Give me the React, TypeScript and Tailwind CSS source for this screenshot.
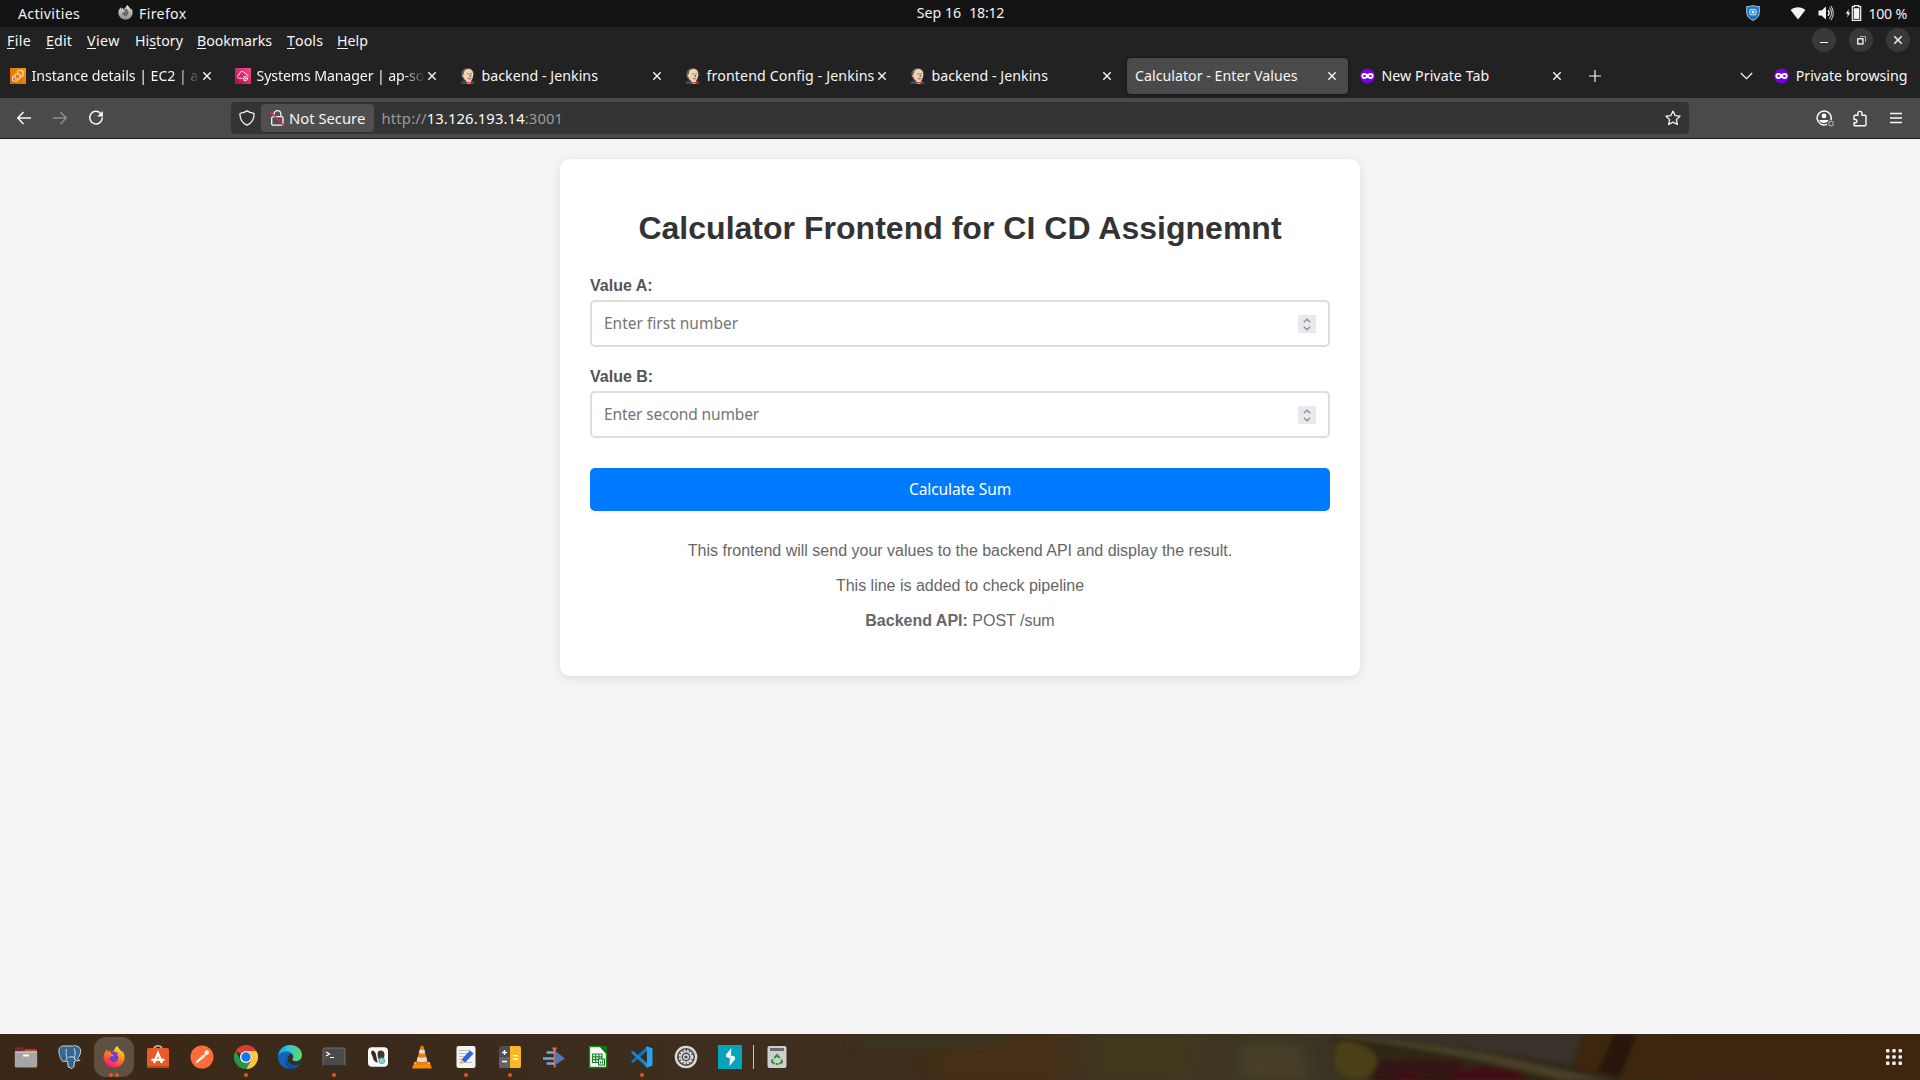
import React from "react";
import { FaEdge, FaFirefoxBrowser } from "react-icons/fa";
import { SiPostgresql } from "react-icons/si";

const CloseX = ({ className = "" }: { className?: string }) => (
  <svg width="10" height="10" viewBox="0 0 10 10" className={className}>
    <path d="M1.3 1.3 8.7 8.7M8.7 1.3 1.3 8.7" stroke="#f4f4f4" strokeWidth="1.4" fill="none" />
  </svg>
);

const PrivateMask = () => (
  <svg width="16" height="16" viewBox="0 0 16 16" className="shrink-0">
    <circle cx="7.5" cy="8" r="7.4" fill="#7b00d8" />
    <path
      fillRule="evenodd"
      fill="#fff"
      d="M4.4 5.1C5.8 5.1 6.6 6 7.5 6s1.7-.9 3.1-.9c2 0 3 .9 3 2.6 0 2-1.3 3.3-3 3.3-1.6 0-2.2-1.3-3.1-1.3S6 11 4.4 11c-1.7 0-3-1.3-3-3.3 0-1.7 1-2.6 3-2.6ZM4.6 7C3.7 7 3.2 7.6 2.9 8c.4.6.9 1 1.7 1s1.3-.5 1.6-1c-.4-.6-.8-1-1.6-1Zm5.8 0c-.8 0-1.3.4-1.6 1 .3.6.8 1 1.6 1s1.3-.4 1.7-1c-.4-.6-.9-1-1.7-1Z"
    />
  </svg>
);

const Jenkins = () => (
  <svg width="16" height="16" viewBox="0 0 16 16" className="shrink-0">
    <path d="M.5 16c0-2 1.3-3.300 3.800-3.500l8 .2c1.600.300 2.200 1.600 2.200 3.300Z" fill="#2f4f63" />
    <path d="M6 12.500 7 16h3.500l1-3.500Z" fill="#f4efe6" />
    <path d="M1.500 7C1 3 3.800.2 7.800.2s6.200 2.600 5.900 6.300l-1.500 5-8.200.5C2.500 10.500 1.700 9 1.500 7Z" fill="#6a6058" />
    <path d="M4 4.500C4.700 2 6.200 1.100 8.300 1.100c2.900 0 4.900 2.200 4.900 5.200 0 4-1.900 7.300-4.500 7.300-2.700 0-4.600-2.100-5-4.600-1.300-.1-1.600-1.800-.6-2.300.8-.2.800-1.400.9-2.200Z" fill="#efd3b4" />
    <path d="M7.500 5.800h1.300M10.600 5.800h1.300M9.900 6.500l.7 1.900-1.100.1M7.700 10.300c1.200.7 2.400.7 3.600-.2" stroke="#5a463c" strokeWidth=".9" fill="none" />
    <path d="m6.400 13.600 2.500.7 2.900-.9.400 2.600-3.100-.7L6.600 16Z" fill="#e0241d" />
  </svg>
);

const Ec2 = () => (
  <svg width="16" height="16" viewBox="0 0 16 16" className="shrink-0">
    <defs>
      <linearGradient id="ec2" x1="0" y1="1" x2="1" y2="0">
        <stop offset="0" stopColor="#d0620f" />
        <stop offset="1" stopColor="#ff9900" />
      </linearGradient>
    </defs>
    <rect width="16" height="16" fill="url(#ec2)" />
    <g fill="none" stroke="#fff" strokeWidth=".9" opacity=".95">
      <rect x="5" y="6" width="5" height="5" rx=".8" />
      <path d="M7.500 5.500V3.300c0-.4.200-.6.600-.6h4.400c.4 0 .6.200.6.600v4.400c0 .4-.2.600-.6.600h-2" />
      <path d="M4.500 8H3.200c-.4 0-.6.200-.6.600v4c0 .4.200.6.600.6h4c.4 0 .6-.2.600-.6v-1.200" />
    </g>
  </svg>
);

const Ssm = () => (
  <svg width="16" height="16" viewBox="0 0 16 16" className="shrink-0">
    <defs>
      <linearGradient id="ssm" x1="0" y1="1" x2="1" y2="0">
        <stop offset="0" stopColor="#b0084d" />
        <stop offset="1" stopColor="#ff4f8b" />
      </linearGradient>
    </defs>
    <rect width="16" height="16" fill="url(#ssm)" />
    <path d="M7 10.300H4.600C3.200 10.200 2.500 9.400 2.600 8.300c0-1 .8-1.700 1.800-1.800C4.400 4.500 5.700 3.500 7.200 3.500c1.300 0 2.200.7 2.600 1.900 1.200-.2 1.900.5 2 1.500.9.200 1.400.7 1.500 1.400" fill="none" stroke="#fff" strokeWidth=".9" />
    <circle cx="10.300" cy="10.600" r="2" fill="none" stroke="#fff" strokeWidth="1.200" strokeDasharray="1.200 .5" />
    <circle cx="10.300" cy="10.600" r=".8" fill="#fff" />
  </svg>
);

interface Tab {
  title: string;
  icon: React.ReactNode;
  active?: boolean;
  fade?: boolean;
  spacing: string;
}

const tabs: Tab[] = [
  { title: "Instance details | EC2 | ap", icon: <Ec2 />, fade: true, spacing: "tracking-[-0.04px]" },
  { title: "Systems Manager | ap-sou", icon: <Ssm />, fade: true, spacing: "tracking-[-0.13px]" },
  { title: "backend - Jenkins", icon: <Jenkins />, spacing: "tracking-[0.03px]" },
  { title: "frontend Config - Jenkins", icon: <Jenkins />, spacing: "tracking-[0.117px]" },
  { title: "backend - Jenkins", icon: <Jenkins />, spacing: "tracking-[0.03px]" },
  { title: "Calculator - Enter Values", icon: null, active: true, spacing: "tracking-[0.02px]" },
  { title: "New Private Tab", icon: <PrivateMask />, spacing: "tracking-[0.06px]" },
];

const menus = [
  { pre: "", key: "F", post: "ile", width: "w-[39px]", spacing: "tracking-[0.33px]" },
  { pre: "", key: "E", post: "dit", width: "w-[41px]", spacing: "tracking-[0.15px]" },
  { pre: "", key: "V", post: "iew", width: "w-[48px]", spacing: "tracking-[0.45px]" },
  { pre: "Hi", key: "s", post: "tory", width: "w-[62px]", spacing: "tracking-[0.03px]" },
  { pre: "", key: "B", post: "ookmarks", width: "w-[90px]", spacing: "tracking-[-0.05px]" },
  { pre: "", key: "T", post: "ools", width: "w-[50px]", spacing: "tracking-[0.1px]" },
  { pre: "", key: "H", post: "elp", width: "w-[40px]", spacing: "tracking-[0.03px]" },
];

function SystemBar() {
  return (
    <div className="grid h-[27px] grid-cols-3 items-center bg-[#131313] text-[#f2f2f2]">
      <div className="flex items-center pl-[18px]">
        <span className="w-[100px] tracking-[0.29px]">Activities</span>
        <svg width="15" height="15" viewBox="0 0 16 16" className="-mt-[2px]">
          <defs>
            <linearGradient id="grey" x1="0" y1="0" x2="0" y2="1">
              <stop offset="0" stopColor="#e4e4e4" />
              <stop offset="1" stopColor="#8c8c8c" />
            </linearGradient>
          </defs>
          <circle cx="8.500" cy="8" r="5" fill="#6a6a6a" />
          <FaFirefoxBrowser size={16} fill="url(#grey)" />
        </svg>
        <span className="ml-1.5 tracking-[0.32px]">Firefox</span>
      </div>
      <div className="-mt-px flex justify-center gap-2 pl-px">
        <span>Sep 16</span>
        <span className="tracking-[-0.25px]">18:12</span>
      </div>
      <div className="flex items-center justify-end pr-[13px]">
        <svg width="16" height="16" viewBox="0 0 16 16" className="-mt-[2px] mr-[29px]">
          <path d="M8 .7c2 .7 4.400.8 6.300.8v5.800c0 4-2.600 6.500-6.300 8-3.700-1.500-6.300-4-6.300-8V1.500c1.900 0 4.300-.1 6.300-.8Z" fill="#1b74c4" stroke="#a9cbe6" strokeWidth="1" />
          <rect x="4.800" y="4.300" width="6.400" height="5.600" rx="1" fill="#4c9fe2" stroke="#cfe6f8" strokeWidth=".9" />
          <rect x="7" y="6.100" width="2" height="2" fill="#fff" />
        </svg>
        <svg width="16" height="14" viewBox="0 0 16 14" className="-mt-px mr-[12px]">
          <path d="M8 13.500.6 4C4.800.3 11.200.3 15.400 4Z" fill="#f2f2f2" />
        </svg>
        <svg width="16" height="16" viewBox="0 0 16 16" className="-mt-[2px] mr-[11px]">
          <path d="M.5 5.500h3L8 1.500v13L3.500 10.500h-3Z" fill="#f2f2f2" />
          <path d="M10 5.200c1.300 1.600 1.300 4 0 5.600" stroke="#f2f2f2" strokeWidth="1.400" fill="none" />
          <path d="M11.300 2.500c3 3 3 8 0 11M12.800.8c3.300 4 3.300 10.400 0 14.400" stroke="#bdbdbd" strokeWidth="1.100" fill="none" />
        </svg>
        <svg width="17" height="16" viewBox="0 0 17 16" className="-mt-[2px] mr-[6px]">
          <path d="M3.800 4 .8 8.800h2L2.200 12.500 5.300 7.500h-2Z" fill="#f2f2f2" />
          <path d="M9.300 1.700V.6h4.400v1.100h2v13.600H7.300V1.700Z" fill="none" stroke="#f2f2f2" strokeWidth="1.200" />
          <rect x="8.700" y="3.200" width="5.600" height="10.700" fill="#f2f2f2" />
        </svg>
        <span className="tracking-[-0.36px] [word-spacing:0.500px]">100 %</span>
      </div>
    </div>
  );
}

function MenuBar() {
  return (
    <div className="flex h-[27px] items-start justify-between">
      <div className="flex pl-[7px] pt-[4px] leading-[20px] text-[#f6f6f6]">
        {menus.map((m) => (
          <span key={m.key + m.post} className={`${m.width} ${m.spacing}`}>
            {m.pre}
            <span className="inline-block h-[18px] border-b border-[#f6f6f6] align-top">{m.key}</span>
            {m.post}
          </span>
        ))}
      </div>
      <div className="flex gap-[13px] pr-[10px] pt-px">
        <span className="flex size-6 items-center justify-center rounded-full bg-[#383838]">
          <span className="mt-[5px] h-px w-2 bg-white" />
        </span>
        <span className="flex size-6 items-center justify-center rounded-full bg-[#383838]">
          <svg width="9" height="9" viewBox="0 0 9 9">
            <rect x=".75" y="2.750" width="5.200" height="5.200" fill="none" stroke="#fff" strokeWidth="1.300" />
            <path d="M3 .5h5.500V6" fill="none" stroke="#a8a8a8" />
          </svg>
        </span>
        <span className="flex size-6 items-center justify-center rounded-full bg-[#383838]">
          <CloseX />
        </span>
      </div>
    </div>
  );
}

function TabStrip() {
  return (
    <div className="flex h-11 items-center pl-[2px] text-[#f6f6f6]">
      {tabs.map((t, i) => (
        <div
          key={i}
          className={`mr-1 flex h-9 w-[221px] shrink-0 items-center rounded-[4px] pl-2 pr-[11px] ${t.active ? "bg-[#4a4a4a] shadow-[0_0_3px_rgba(0,0,0,0.6)]" : ""}`}
        >
          {t.icon}
          <span
            className={`min-w-0 flex-1 whitespace-nowrap ${t.icon ? "ml-[5.500px]" : "ml-0"} ${t.spacing} ${
              t.fade ? "mr-[2px] [mask-image:linear-gradient(to_left,transparent,black_22px)]" : ""
            }`}
          >
            {t.title}
          </span>
          <CloseX className="shrink-0" />
        </div>
      ))}
      <svg width="12" height="12" viewBox="0 0 12 12" className="ml-[12px]">
        <path d="M6 0v12M0 6h12" stroke="#f4f4f4" strokeWidth="1.200" />
      </svg>
      <svg width="13" height="8" viewBox="0 0 13 8" className="ml-auto mr-[21px] shrink-0">
        <path d="M.8 1 6.500 6.700 12.200 1" stroke="#f4f4f4" strokeWidth="1.300" fill="none" />
      </svg>
      <PrivateMask />
      <span className="ml-[5.500px] mr-[12.500px] whitespace-nowrap">Private browsing</span>
    </div>
  );
}

function NavBar() {
  return (
    <div className="flex h-[40px] items-center bg-[#4a4a4a]">
      <svg width="14" height="14" viewBox="0 0 14 14" className="ml-[17px]">
        <path d="M14 7H1M6.500 1 .8 7l5.700 6" stroke="#fbfbfb" strokeWidth="1.500" fill="none" />
      </svg>
      <svg width="14" height="14" viewBox="0 0 14 14" className="ml-[22px]">
        <path d="M0 7h13M7.500 1l5.700 6-5.700 6" stroke="#8e8e8e" strokeWidth="1.500" fill="none" />
      </svg>
      <svg width="16" height="16" viewBox="0 0 16 16" className="ml-[21px]">
        <path d="M12.500 3.200A6.300 6.300 0 1 0 14.300 8" stroke="#fbfbfb" strokeWidth="1.500" fill="none" strokeLinecap="round" />
        <path d="M14.900.9v5.700H9.200Z" fill="#fbfbfb" />
      </svg>
      <div className="ml-[127px] flex h-8 w-[1458px] items-center rounded-[4px] bg-[#343434] pl-[8px] text-[15px]">
        <svg width="16" height="16" viewBox="0 0 16 16">
          <path d="M8 .9c1.800 1.200 4 2 6.300 2.200.6 0 .8.400.8.900C15 9.200 12.400 13.300 8 15.200 3.600 13.300 1 9.200.9 4c0-.5.200-.9.800-.9C4 2.900 6.200 2.100 8 .9Z" stroke="#f4f4f4" strokeWidth="1.300" fill="none" />
        </svg>
        <span className="ml-[6px] flex h-7 w-[113px] items-center rounded-[4px] bg-[#4f4f4f] pl-[9px] text-[#f6f6f6]">
          <svg width="15" height="16" viewBox="0 0 15 16" className="shrink-0">
            <path d="M4 6.500V4a3.400 3.400 0 0 1 6.800 0v2.500" stroke="#f4f4f4" strokeWidth="1.300" fill="none" />
            <rect x="1.700" y="6.700" width="11.300" height="8.500" rx="1.500" stroke="#f4f4f4" strokeWidth="1.300" fill="none" />
            <path d="M0 1.500 13.800 15.500" stroke="#e22850" strokeWidth="1.500" />
          </svg>
          <span className="ml-[4px] whitespace-nowrap text-[14.800px]">Not Secure</span>
        </span>
        <span className="ml-[7.500px] whitespace-nowrap text-[14.800px] text-[#9a9a9a]">
          <span className="tracking-[0.18px]">http://</span>
          <span className="tracking-[0.12px] text-[#fbfbfb]">13.126.193.14</span>
          <span className="tracking-[0.1px]">:3001</span>
        </span>
        <svg width="16" height="16" viewBox="0 0 16 16" className="ml-auto mr-[8px]">
          <path d="m8 1.100 2.100 4.500 4.900.6-3.600 3.400.9 4.900L8 12.100l-4.300 2.400.9-4.900L1 6.200l4.900-.6Z" stroke="#f4f4f4" strokeWidth="1.300" strokeLinejoin="round" fill="none" />
        </svg>
      </div>
      <svg width="19" height="17" viewBox="0 0 19 17" className="ml-[127px]">
        <path d="M14.800 10.200A7 7 0 1 0 11 14.400" stroke="#fbfbfb" strokeWidth="1.500" fill="none" />
        <circle cx="8" cy="5.900" r="2.400" fill="#fbfbfb" />
        <path d="M3.600 10h8.200c.6 0 .8.500.4 1-1.900 2.600-6.500 2.700-8.700 0-.4-.5-.4-1 .1-1Z" fill="#fbfbfb" />
        <circle cx="15" cy="13.600" r="2.300" stroke="#a5a5a5" strokeWidth="1.200" fill="none" />
      </svg>
      <svg width="16" height="17" viewBox="0 0 16 17" className="ml-[17px]">
        <path d="M2 9.500V6.200c0-.6.300-.9.900-.9h3V3.400a2 2 0 0 1 4 0v1.900h3.200c.6 0 .9.300.9.900v8.600c0 .6-.3.900-.9.900H2.900c-.6 0-.9-.3-.9-.9v-2h1.600a1.700 1.700 0 0 0 0-3.300H2Z" stroke="#fbfbfb" strokeWidth="1.400" fill="none" strokeLinejoin="round" />
      </svg>
      <svg width="12" height="12" viewBox="0 0 12 12" className="ml-[22px]">
        <path d="M0 1.500h12M0 6h12M0 10.500h12" stroke="#fbfbfb" strokeWidth="1.300" />
      </svg>
    </div>
  );
}

function NumberField({ label, hint, spacing }: { label: string; hint: string; spacing: string }) {
  return (
    <div className="mb-5 h-[71px]">
      <label className="block h-6 pt-px font-bold leading-[18px] text-[#555]">{label}</label>
      <div className="flex h-[47px] items-center justify-between rounded-[5px] border-2 border-[#ddd] bg-white pl-3 pr-3">
        <span className={`-mt-px font-['Noto_Sans',sans-serif] text-[15.500px] text-[#757575] ${spacing}`}>{hint}</span>
        <span className="mt-px flex size-[18px] items-center justify-center bg-[#e9e9ed]">
          <svg width="8" height="13" viewBox="0 0 8 13">
            <path d="M.8 4.300 4 1.200l3.200 3.100M.8 8.700 4 11.800l3.200-3.100" stroke="#8f8f9d" strokeWidth="1.500" fill="none" />
          </svg>
        </span>
      </div>
    </div>
  );
}

function Page() {
  return (
    <div className="h-[895px] bg-[#f4f4f4] pt-5 font-['Liberation_Sans',Arial,sans-serif] text-base leading-[18px]">
      <div className="mx-auto h-[517px] w-[800px] rounded-[10px] bg-white px-[30px] pt-[51px] shadow-[0_2px_10px_rgba(0,0,0,0.1)]">
        <h1 className="mb-[29px] text-center text-[32px] font-bold leading-[37px] tracking-[0.02px] text-[#333]">
          Calculator Frontend for CI CD Assignemnt
        </h1>
        <NumberField label="Value A:" hint="Enter first number" spacing="tracking-normal" />
        <NumberField label="Value B:" hint="Enter second number" spacing="tracking-[-0.12px]" />
        <button className="mt-[30px] block h-[43px] w-full rounded-[5px] bg-[#007bff] pb-px font-['Noto_Sans',sans-serif] text-[15.500px] tracking-[-0.08px] text-white">
          Calculate Sum
        </button>
        <div className="mt-[31px] flex flex-col gap-[17px] text-center text-[#666]">
          <p>This frontend will send your values to the backend API and display the result.</p>
          <p>This line is added to check pipeline</p>
          <p>
            <strong>Backend API:</strong> POST /sum
          </p>
        </div>
      </div>
    </div>
  );
}

const Art = ({ children }: { children: React.ReactNode }) => (
  <svg width="24" height="24" viewBox="0 0 24 24">
    {children}
  </svg>
);

const dock: { name: string; dots: number; active?: boolean; art: React.ReactNode }[] = [
  {
    name: "Files",
    dots: 0,
    art: (
      <Art>
        <path d="M1 4.500C1 3 1.500 2.300 3 2.300h6l2.500 2H21c1.300 0 2 .7 2 2V12H1Z" fill="#7c2440" />
        <path d="M11 4.300h10c1.300 0 2 .7 2 2V9h-13Z" fill="#c8472f" />
        <rect x=".8" y="6.500" width="22.400" height="16" rx="1.500" fill="#a6a6a6" />
        <rect x=".8" y="6.500" width="22.400" height="1" fill="#d6d6d6" />
        <rect x="9" y="9.500" width="6" height="2" rx=".6" fill="#fafafa" />
      </Art>
    ),
  },
  {
    name: "pgAdmin",
    dots: 0,
    art: (
      <svg width="26" height="26" viewBox="-1 -1 26 26">
        <path d="M5 1C1 1.500.3 5 1.300 9c.8 3.500 2 7 4.200 7.500L9.500 16l.8 6 3.500 1.500 2-2 .7-5.500 5-.5-1.700-2c2-2.500 3.500-6.500 2.700-9C21 .8 17 .2 14.500 1Z" fill="#336791" stroke="#dfe8f0" strokeWidth="1" />
        <path d="M8.500 4C7.500 7 8 10 9 12.500L8 15.500M16 3.500c1.500 3 1.500 6 .3 9l1 2.500M10.500 12.500c1.500-1 4-1 5.500 0" fill="none" stroke="#dfe8f0" strokeWidth="1" />
        <SiPostgresql size={24} color="#336791" opacity=".35" />
      </svg>
    ),
  },
  {
    name: "Firefox",
    dots: 2,
    active: true,
    art: (
      <Art>
        <defs>
          <linearGradient id="fox" x1=".8" y1="0" x2=".3" y2="1">
            <stop offset="0" stopColor="#fff14a" />
            <stop offset=".4" stopColor="#ff980e" />
            <stop offset=".8" stopColor="#ff3750" />
            <stop offset="1" stopColor="#e31587" />
          </linearGradient>
        </defs>
        <g transform="translate(1 1) scale(.92)">
          <circle cx="12.500" cy="11.800" r="7" fill="#6b3be0" />
          <FaFirefoxBrowser size={24} fill="url(#fox)" />
        </g>
      </Art>
    ),
  },
  {
    name: "Ubuntu Software",
    dots: 0,
    art: (
      <Art>
        <path d="M8 4.500C8-.3 16-.3 16 4.500" stroke="#e4d4c4" strokeWidth="1.300" fill="none" />
        <rect x="1" y="3" width="22" height="20" rx="1.800" fill="#ea5a28" />
        <rect x="1" y="21" width="22" height="2" rx="1" fill="#c2441b" />
        <path d="m8 18 4-10 4 10" stroke="#fff" strokeWidth="2.300" fill="none" />
        <path d="M5.500 14.800h13" stroke="#fff" strokeWidth="2.200" fill="none" />
      </Art>
    ),
  },
  {
    name: "Postman",
    dots: 0,
    art: (
      <Art>
        <circle cx="12" cy="12" r="11.500" fill="#ff6c37" />
        <path d="m5.500 18.500 1.500-3.300 6-5.200 1.800 1.800L8.500 17Z" fill="#fff" />
        <path d="m12 11 3-2.500 1.500 1.500-3 3Z" fill="#fbd9c9" />
        <circle cx="16.800" cy="7.500" r="2.200" fill="#fff" />
      </Art>
    ),
  },
  {
    name: "Chrome",
    dots: 1,
    art: (
      <Art>
        <path d="M1.600 6A12 12 0 0 1 22.400 6H12a6 6 0 0 0-5.200 3Z" fill="#dd3b2d" />
        <path d="M22.400 6A12 12 0 0 1 12 24l5.200-9A6 6 0 0 0 12 6Z" fill="#fcc934" />
        <path d="M12 24A12 12 0 0 1 1.600 6l5.200 9a6 6 0 0 0 10.400 0Z" fill="#25964a" />
        <circle cx="12" cy="12" r="6" fill="#fff" />
        <circle cx="12" cy="12" r="4.700" fill="#1a73e8" />
      </Art>
    ),
  },
  {
    name: "Edge",
    dots: 0,
    art: (
      <Art>
        <defs>
          <linearGradient id="edge" x1="0" y1=".3" x2="1" y2=".3">
            <stop offset="0" stopColor="#1f9fe4" />
            <stop offset=".5" stopColor="#38c5d8" />
            <stop offset="1" stopColor="#63dc55" />
          </linearGradient>
        </defs>
        <circle cx="12" cy="12" r="12" fill="#0f66b8" />
        <path d="M0 11C.8 4.500 5.800 0 12 0c7 0 12 4.600 12 10.300 0 3.600-2.600 6-5.800 6-2.600 0-4-.9-4-1.800 0-.7 1-1.100 1-2.900C15.200 8.800 12.400 6.500 8.500 6.500 4.500 6.500 1.200 8.200 0 11Z" fill="url(#edge)" />
        <path d="M8.800 12.500c-1.600 5 3.200 9.500 13 6.500l-.3.700C19.500 22.500 16 24 12.500 24 8.500 23 5.500 18 8.800 12.500Z" fill="#0b4a92" />
        <path d="M14.200 14.500c0 .9 1.400 1.800 4 1.800 3.200 0 5.800-2.400 5.800-6V12c0 3-1 5.500-2.500 7.500-7 2.500-13-1.500-12-6.500.4-1.700 1.600-3.200 3.300-4 1.700.4 2.600 1.700 2.400 3-.1 1-1 1.500-1 2.500Z" fill="#3a2b1d" />
        <path d="M8.800 13.500c-.8 5 5.200 8.500 12.700 6-1 1.600-2.600 2.900-4.500 3.700C11 22.500 7 18 8.800 13.500Z" fill="#0d54a0" />
      </Art>
    ),
  },
  {
    name: "Terminal",
    dots: 1,
    art: (
      <Art>
        <rect x="1" y="3" width="22" height="18.500" rx="1.800" fill="#4a4a4a" stroke="#707070" />
        <rect x="1" y="20" width="22" height="2" rx="1" fill="#2c2c2c" />
        <path d="m4 7 3.500 2L4 11M8 12.500h4" stroke="#fff" strokeWidth="1.200" fill="none" />
      </Art>
    ),
  },
  {
    name: "DBeaver",
    dots: 0,
    art: (
      <Art>
        <rect x="2" y="2.300" width="20" height="19.500" rx="4" fill="#fbfbfb" />
        <path d="M5.300 6.500C6.500 4.500 8.500 5.500 9.500 8c1 2.700 1 5.500 2.300 9.500-3 0-5-3.500-5.300-6.500-1-1-1.700-3-1.200-4.500Z" fill="#3a2a22" />
        <path d="M12 6.500C15 4.500 18.500 6 18.500 9.500S17 15 14 16c-2-1.500-3-6.500-2-9.500Z" fill="#4b342b" />
        <circle cx="15.800" cy="15.800" r="3.300" fill="#56b8b4" />
        <circle cx="15.800" cy="15.800" r="1.400" fill="none" stroke="#dff" strokeWidth=".8" />
      </Art>
    ),
  },
  {
    name: "VLC",
    dots: 0,
    art: (
      <Art>
        <path d="M4.500 17h15L22 23.500H2Z" fill="#f58a0b" />
        <path d="M4.500 17h15l.8 2H3.700Z" fill="#ffb14a" />
        <path d="M10.800.8h2.400L18 18.500c-2 2-10 2-12 0Z" fill="#f07c0a" />
        <path d="m9.700 4.500-.9 3.500c2 .8 4.400.8 6.400 0l-.9-3.500c-1.500.5-3.100.5-4.600 0ZM7.700 12l-1 4c3 1.500 7.600 1.500 10.600 0l-1-4c-2.600 1-6 1-8.600 0Z" fill="#dedede" />
      </Art>
    ),
  },
  {
    name: "Text Editor",
    dots: 1,
    art: (
      <Art>
        <rect x="2.500" y="1" width="19" height="22" rx="2" fill="#f3f3f1" />
        <path d="M5 5.500h11M5 8.500h12M5 11.500h8M5 14.500h5M5 17.500h13" stroke="#c0bdac" strokeWidth="1.200" />
        <path d="m7.500 14.500 8.500-9 3.500 3-8.500 9.200Z" fill="#2f63e0" />
        <path d="m7.500 14.500 3.500 3.200-5 1.600Z" fill="#e8b27c" />
      </Art>
    ),
  },
  {
    name: "Calculator",
    dots: 1,
    art: (
      <Art>
        <rect x="1" y="1" width="22" height="22" rx="2" fill="#4f4f4f" />
        <path d="M1 12h11v11H3a2 2 0 0 1-2-2Z" fill="#646464" />
        <path d="M12 1h9a2 2 0 0 1 2 2v18a2 2 0 0 1-2 2h-9Z" fill="#fbb724" />
        <path d="M4 7.500h5M6.500 5v5M4 16.500h5M15 10.700h5M15 14h5" stroke="#fff" strokeWidth="1.300" />
      </Art>
    ),
  },
  {
    name: "Input Leap",
    dots: 0,
    art: (
      <Art>
        <path d="M4.500 7.500H12M1 13.500h11M4.500 18.500H12" stroke="#74a7e3" strokeWidth="2.700" />
        <path d="M14 6.500 23 13.500l-9 6Z" fill="#4b79b5" />
        <path d="M10 2.500h5L13.700 6v16.500h-2V6Z" fill="#dc6e5c" />
      </Art>
    ),
  },
  {
    name: "LibreOffice Calc",
    dots: 0,
    art: (
      <Art>
        <path d="M3.500 1.500h11l6 7v14h-17Z" fill="#fff" stroke="#14891a" strokeWidth="1.400" />
        <path d="M13.500 1H21v8.500Z" fill="#14701a" />
        <path d="M6.500 9h9.500v8.500H6.500ZM6.500 11.800h9.500M6.500 14.600h9.500M9.700 9v8.500M12.900 9v8.500" stroke="#1b8421" strokeWidth="1.200" fill="none" />
        <rect x="12.500" y="14" width="6" height="6" fill="#eafbe8" stroke="#14701a" />
        <path d="M14.500 18.500v-2M16.500 18.500v-3" stroke="#14701a" />
      </Art>
    ),
  },
  {
    name: "VS Code",
    dots: 1,
    art: (
      <Art>
        <path d="M17 6 3 18.200.8 16.500 17 1.500Z" fill="#1173bd" />
        <path d="M17 18 3 5.800.8 7.500 17 22.500Z" fill="#1488d2" />
        <path d="m17 1.200 5.500 2.400v16.800L17 22.800 15.500 21l1.500-2V5l-1.500-2Z" fill="#2aa2f0" />
      </Art>
    ),
  },
  {
    name: "Settings",
    dots: 0,
    art: (
      <Art>
        <circle cx="12" cy="12" r="11.300" fill="#d9d9d9" />
        <circle cx="12" cy="12" r="9" fill="#4a4a4a" />
        <circle cx="12" cy="12" r="6.300" fill="none" stroke="#dcdcdc" strokeWidth="2.200" strokeDasharray="2.300 1" />
        <circle cx="12" cy="12" r="5" fill="none" stroke="#dcdcdc" strokeWidth="1.200" />
        <circle cx="12" cy="12" r="2.300" fill="none" stroke="#dcdcdc" strokeWidth="1.400" />
      </Art>
    ),
  },
  {
    name: "Burp Suite",
    dots: 0,
    art: (
      <Art>
        <rect width="24" height="24" fill="#06a3bd" />
        <path d="M13.300 3 8 9.500v2.300l3.800 1.700-.2 7.500L17 14.200v-2.400L13 10.300Z" fill="#fff" />
        <path d="M11.700 11.200 13 10.300M11.800 13.500l1.500-.8" stroke="#06a3bd" strokeWidth=".6" />
      </Art>
    ),
  },
];

function Dock() {
  return (
    <div className="relative h-[46px] overflow-hidden bg-[#3a2819]">
      <svg width="1920" height="46" viewBox="0 0 1920 46" preserveAspectRatio="none" className="absolute inset-0">
        <defs>
          <filter id="soft" x="-10%" y="-50%" width="120%" height="200%">
            <feGaussianBlur stdDeviation="9 5" />
          </filter>
          <filter id="softer" x="-10%" y="-50%" width="120%" height="200%">
            <feGaussianBlur stdDeviation="2" />
          </filter>
          <linearGradient id="wood" x1="0" y1="0" x2="1" y2="0">
            <stop offset="0" stopColor="#3b2715" />
            <stop offset=".15" stopColor="#3b2a1a" />
            <stop offset=".3" stopColor="#3c2c1d" />
            <stop offset=".42" stopColor="#3e2f1d" />
            <stop offset=".5" stopColor="#3e2d19" />
            <stop offset=".6" stopColor="#3f3622" />
            <stop offset=".7" stopColor="#3b3322" />
            <stop offset="1" stopColor="#382512" />
          </linearGradient>
        </defs>
        <rect width="1920" height="46" fill="url(#wood)" />
        <g filter="url(#soft)">
          <path d="M860 0h160l-30 14h-130Z" fill="#393423" />
          <path d="M930 20 1060 0l15 46H940Z" fill="#472e13" />
          <path d="M1090 0h110l-10 46h-100Z" fill="#40371f" />
          <path d="M1240 10h60l10 36h-70Z" fill="#474028" />
        </g>
        <g filter="url(#softer)">
          <path d="M1320 1h262l-12 34c-80-22-160-31-252-34Z" fill="#37322b" />
          <path d="M1582 0h338v46h-350l3-14Z" fill="#3c270f" />
          <path d="M1615 0h22l-18 46h-26Z" fill="#2b180d" />
          <path d="M1330 3c90 3 180 14 290 40v8h-245Z" fill="#2f2614" />
          <path d="M1375 28l50-3 40 2-10 20h-82Z" fill="#351717" />
          <path d="M1318 1c100 5 170 17 240 34 20 4 36 8 54 11h-52C1490 26 1400 10 1318 1Z" fill="#494027" />
          <path d="M1390 46c6-10 25-10 36-2ZM1448 46c10-17 62-18 84 0Z" fill="#421019" />
          <path d="M1338 8c14-2 30 4 38 14 4 8-3 18-12 22-15 2-26-2-30-14Z" fill="#4a3f12" />
        </g>
      </svg>
      <div className="relative flex h-full items-start pl-1">
        {dock.map((d) => (
          <div key={d.name} className="relative flex h-[46px] w-11 justify-center">
            <div className={`mt-[3px] flex h-10 w-10 items-center justify-center rounded-[12px] ${d.active ? "bg-[#5e5042]" : ""}`}>
              {d.art}
            </div>
            <div className="absolute inset-x-0 top-[39px] flex justify-center gap-[2px]">
              {Array.from({ length: d.dots }, (_, i) => (
                <span key={i} className="size-[4px] rounded-full bg-[#e95420]" />
              ))}
            </div>
          </div>
        ))}
        <span className="ml-[1px] mt-[11px] h-6 w-px bg-[#c9c4be]" />
        <div className="ml-[11px] mt-[11px]">
          <Art>
            <rect x="2.500" y="1" width="19" height="22" rx="2" fill="#cfcfcf" />
            <rect x="5" y="3" width="14" height="3" fill="#6b6b6b" />
            <path d="m9.300 13 2.700-3 2.700 3M16.300 14.500l.7 2.500-2.700 1.800M9.700 18.800 7 17l.7-2.800M10.800 19h2.400" stroke="#2f9332" strokeWidth="2" fill="none" />
          </Art>
        </div>
        <svg width="16" height="16" viewBox="0 0 16 16" className="ml-auto mr-[18px] mt-[15px]">
          {[0, 6.250, 12.500].map((y) =>
            [0, 6.250, 12.500].map((x) => <rect key={`${x}-${y}`} x={x} y={y} width="3.500" height="3.500" rx="1" fill="#f4f2f0" />)
          )}
        </svg>
      </div>
    </div>
  );
}

export default function App() {
  return (
    <div className="flex h-[1080px] w-[1920px] flex-col overflow-hidden bg-[#222222] font-['Noto_Sans',sans-serif] text-[14.200px] leading-[20px]">
      <SystemBar />
      <MenuBar />
      <TabStrip />
      <NavBar />
      <div className="h-px bg-[#1c1c1c]" />
      <Page />
      <Dock />
    </div>
  );
}
